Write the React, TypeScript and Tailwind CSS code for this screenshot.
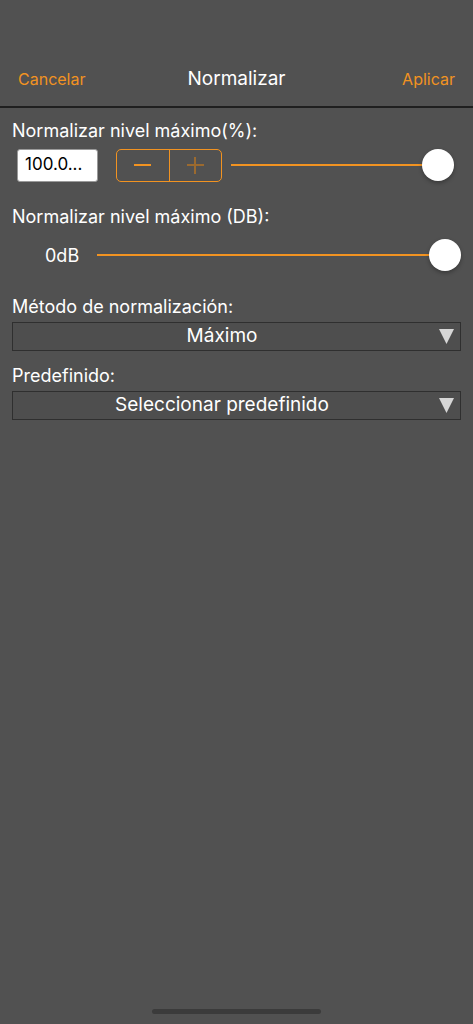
import React from "react";

function Slider({ className }: { className: string }) {
  return (
    <div className={"relative flex h-[34px] items-center " + className}>
      <div className="h-[2px] w-full bg-[#f29321]" />
      <div className="absolute right-0 top-[1px] h-[32px] w-[32px] rounded-full bg-white shadow-[0_2px_4px_rgba(0,0,0,0.3)]" />
    </div>
  );
}

function Select({ value }: { value: string }) {
  return (
    <div className="relative flex h-[29px] items-center justify-center border border-[#2f2f2f] bg-[#4e4e4e] pr-[29px] text-[19px] text-white">
      <span>{value}</span>
      <svg className="absolute right-[6px] top-[6px]" width="15" height="15" viewBox="0 0 15 15">
        <polygon points="0,0 15,0 7.5,15" fill="#d6d6d6" />
      </svg>
    </div>
  );
}

export default function App() {
  return (
    <div className="flex min-h-[1024px] w-full flex-col bg-[#515151] text-white" style={{ fontFamily: "Inter, 'Noto Sans', sans-serif" }}>
      <div className="h-[108px] border-b-2 border-[#1f1f1f]">
        <div className="mt-[57px] flex h-[44px] items-center px-[18px]">
          <span className="flex-1 text-[16px] text-[#f29321]">Cancelar</span>
          <span className="text-[19px]">Normalizar</span>
          <span className="flex-1 text-right text-[16px] text-[#f29321]">Aplicar</span>
        </div>
      </div>

      <div className="px-[12px]">
        <div className="mt-[12px] text-[18px] leading-[22px]">Normalizar nivel máximo(%):</div>
        <div className="mt-[6px] flex items-center">
          <div className="ml-[5px] flex h-[33px] w-[81px] items-center rounded-[3px] border border-[#9a9a9a] bg-white pl-[7px] text-[17px] text-black">100.0...</div>
          <div className="ml-[18px] flex h-[33px] w-[106px] rounded-[5px] border border-[#f29321]">
            <div className="flex flex-1 items-center justify-center border-r border-[#f29321]">
              <div className="h-[2px] w-[17px] bg-[#f29321]" />
            </div>
            <div className="relative flex flex-1 items-center justify-center">
              <div className="h-[2px] w-[17px] bg-[#9b6a2f]" />
              <div className="absolute h-[17px] w-[2px] bg-[#9b6a2f]" />
            </div>
          </div>
          <Slider className="ml-[9px] mr-[7px] flex-1" />
        </div>

        <div className="mt-[24px] text-[18px] leading-[22px]">Normalizar nivel máximo (DB):</div>
        <div className="mt-[10px] flex items-center">
          <span className="ml-[33px] w-[52px] text-[18px]">0dB</span>
          <Slider className="flex-1" />
        </div>

        <div className="mt-[24px] text-[18px] leading-[22px]">Método de normalización:</div>
        <div className="mt-[4px]">
          <Select value="Máximo" />
        </div>

        <div className="mt-[14px] text-[18px] leading-[22px]">Predefinido:</div>
        <div className="mt-[4px]">
          <Select value="Seleccionar predefinido" />
        </div>
      </div>

      <div className="flex-1" />
      <div className="mb-[10px] flex justify-center">
        <div className="h-[5px] w-[169px] rounded-full bg-[#3b3b3b]" />
      </div>
    </div>
  );
}
